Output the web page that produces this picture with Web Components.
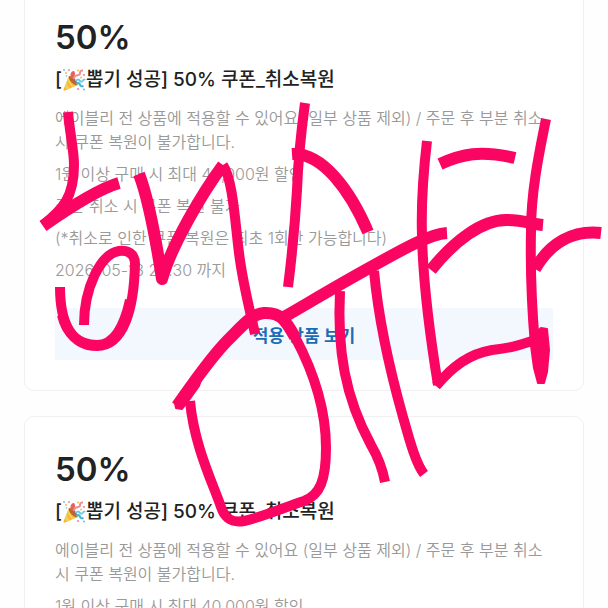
<!DOCTYPE html>
<html lang="ko">
<head>
<meta charset="utf-8">
<meta name="viewport" content="width=device-width, initial-scale=1">
<title>쿠폰</title>
<style>
body {
    margin: 0;
    background: #fefefe;
    font-family: Inter, "Noto Sans CJK KR", sans-serif;
    color: #222;
    overflow-x: hidden;
}
</style>
</head>
<body>
<coupon-page>
    <coupon-card rate="50%">
        <span slot="name">뽑기 성공] 50% 쿠폰_취소복원</span>
        <p>에이블리 전 상품에 적용할 수 있어요 (일부 상품 제외) / 주문 후 부분 취소 시 쿠폰 복원이 불가합니다.</p>
        <p>1원 이상 구매 시 최대 40,000원 할인</p>
        <p>주문 취소 시 쿠폰 복원 불가</p>
        <p>(*취소로 인한 쿠폰 복원은 최초 1회만 가능합니다)</p>
        <p>2026-05-13 23:30 까지</p>
        <span slot="action">적용 상품 보기</span>
    </coupon-card>
    <coupon-card rate="50%">
        <span slot="name">뽑기 성공] 50% 쿠폰_취소복원</span>
        <p>에이블리 전 상품에 적용할 수 있어요 (일부 상품 제외) / 주문 후 부분 취소 시 쿠폰 복원이 불가합니다.</p>
        <p>1원 이상 구매 시 최대 40,000원 할인</p>
    </coupon-card>
    <pen-marks slot="overlay"></pen-marks>
</coupon-page>

<script>
const page_template = document.createElement("template");
page_template.innerHTML = `
<style>
:host {
    display: block;
    position: relative;
    height: 100vh;
    overflow: hidden;
}
/* the list is scrolled a little, so the first card starts above the window */
main {
    display: flex;
    flex-direction: column;
    gap: 25px;
    margin-top: -16px;
    padding: 0 24px 24px;
}
</style>
<main><slot></slot></main>
<slot name="overlay"></slot>
`;

const popper_template = document.createElement("template");
popper_template.innerHTML = `
<style>
:host {
    display: inline-block;
    width: 24px;
    height: 24px;
}
svg { display: block; width: 100%; height: 100%; }
</style>
<svg viewBox="0 0 24 24" role="img" aria-label="🎉">
    <path d="M7 8 L1.5 21.5 Q1.3 23 3 22.6 L15.5 17 Q14 11 7 8Z" fill="#f9b52c"/>
    <path d="M5 13 Q5 19 8.5 20.2 L5.5 21.5 Q3 20 3.4 17Z M6.6 9 Q7.5 16 12.5 18.3 L10.5 19.3 Q6 16 5.6 11.5Z" fill="#f6d264"/>
    <ellipse cx="11.2" cy="12.6" rx="6" ry="2.3" transform="rotate(46 11.2 12.6)" fill="#b9672b"/>
    <path d="M9 10 Q7.5 6 10 3.5 Q12.5 2 13 5 Q13.3 8 11.5 11" fill="#e8605a"/>
    <path d="M12 11 Q12 7.5 15.5 7.2 Q18.5 7 18 4.5 Q18 2.5 21 2.6" fill="none" stroke="#ee8d91" stroke-width="2"/>
    <path d="M13.5 13 Q16 10.5 17.5 12.5 Q19 15 21 12.5 Q22 11 23 12" fill="none" stroke="#6cc7ec" stroke-width="2"/>
    <path d="M14 15.5 Q17 14.2 18 16.5 Q18.5 19 21.5 18" fill="none" stroke="#45b4dd" stroke-width="2"/>
    <g fill="#f4bf4f"><circle cx="4" cy="5" r="1"/><circle cx="16" cy="2.5" r="1"/><circle cx="19" cy="9.5" r="1"/></g>
    <g fill="#e9847c"><circle cx="7" cy="2" r=".9"/><circle cx="22" cy="7" r="1"/><circle cx="16" cy="21" r="1"/></g>
    <g fill="#69bfe2"><circle cx="2" cy="2" r=".9"/><circle cx="4.5" cy="8" r=".8"/><circle cx="22" cy="21.5" r="1"/></g>
</svg>
`;

const card_template = document.createElement("template");
card_template.innerHTML = `
<style>
:host {
    display: block;
    padding: 30px;
    background: #fff;
    border: 1px solid #f0f0f0;
    border-radius: 10px;
}
h2 {
    margin: 0 0 7px;
    font-size: 33px;
    line-height: 44px;
    font-weight: 600;
}
h3 {
    display: flex;
    align-items: center;
    margin: 0 0 12px;
    font-size: 19px;
    line-height: 28px;
    font-weight: 500;
}
.notes {
    display: flex;
    flex-direction: column;
    gap: 8px;
    margin-bottom: 26px;
}
::slotted(p) {
    margin: 0;
    font-size: 16px;
    line-height: 24px;
    font-weight: 350;
    color: #999;
    word-break: keep-all;
}
button {
    display: block;
    width: 100%;
    height: 52px;
    border: 0;
    background: #f3f8fe;
    color: #1c6cb4;
    font: inherit;
    font-size: 17px;
    font-weight: 600;
}
</style>
<h2 id="rate"></h2>
<h3>[<party-popper></party-popper><slot name="name"></slot></h3>
<div class="notes"><slot></slot></div>
<button type="button"><slot name="action"></slot></button>
`;

const marks_template = document.createElement("template");
marks_template.innerHTML = `
<style>
:host {
    position: absolute;
    top: 0;
    left: 0;
    pointer-events: none;
}
svg { display: block; }
path { fill: none; stroke: #fb0562; stroke-width: 10; stroke-linejoin: round; }
.wide { stroke-width: 12; }
.blob { fill: #fb0562; stroke-width: 2; }
</style>
<svg width="608" height="608" viewBox="0 0 608 608" aria-hidden="true">
    <path d="M68 112 C70 135 74 150 74 165 C74 197 63 209 43 225"/>
    <path class="wide" d="M43 226 C66 210 98 189 119 183"/>
    <path d="M60 287 C60 322 71 346 97 346 C124 346 134 308 135 264 C135 253 127 250 119 251 C100 254 84 289 84 325"/>
    <path d="M62 315 C66 333 78 345 97 345 C114 345 124 327 130 300"/>
    <path class="wide" d="M139 174 C149 200 156 240 162 279 C172 244 203 192 223 165"/>
    <path d="M223 165 C233 180 235 222 239 253 C243 285 250 310 255 334"/>
    <path d="M305 103 C300 140 298 163 297 190 C295 225 292 255 288 287"/>
    <path class="wide" d="M292 154 C322 152 350 190 368 232"/>
    <path class="wide" d="M447 233 C430 234 403 249 371 267 C340 284 310 302 284 317"/>
    <path class="wide" d="M177 406 C194 382 210 358 228 340 C243 325 252 314 264 313 C281 312 286 321 295 337"/>
    <path d="M264 313 C281 312 286 321 295 337 C310 365 326 405 326 448 C326 480 320 495 304 501 C283 508 262 517 244 521 C232 523 225 519 221 507 C214 486 194 446 190 401"/>
    <path class="blob" d="M175 403 L192 380 L202 377 L199 386 L189 400 L182 409 L176 408Z"/>
    <path d="M340 291 C337 350 345 397 371 445 C378 457 382 466 385 482"/>
    <path d="M374 271 C379 325 392 378 403 417 C410 442 416 464 424 474"/>
    <path d="M427 141 C423 175 421 205 422 235 C423 282 429 330 438 385"/>
    <path d="M436 386 C453 366 469 354 492 350 C511 348 520 345 535 340"/>
    <path class="wide" d="M440 164 C462 154 480 150 515 158"/>
    <path class="wide" d="M431 270 C454 241 482 220 506 220 C523 220 531 224 543 225"/>
    <path d="M546 119 C540 149 531 190 531 230 C530 276 532 310 535 345"/>
    <path class="wide" d="M535 269 C550 243 573 230 601 233"/>
    <path class="blob" d="M530 338 L541 328 L547 329 L549 350 L547 372 L544 383 L538 383 L534 368Z"/>
</svg>
`;

class CouponPage extends HTMLElement {
    constructor() {
        super();
        this.attachShadow({ mode: "open" }).appendChild(page_template.content.cloneNode(true));
    }
}

class PartyPopper extends HTMLElement {
    constructor() {
        super();
        this.attachShadow({ mode: "open" }).appendChild(popper_template.content.cloneNode(true));
    }
}

class CouponCard extends HTMLElement {
    constructor() {
        super();
        this.attachShadow({ mode: "open" }).appendChild(card_template.content.cloneNode(true));
    }

    static get observedAttributes() {
        return ["rate"];
    }

    attributeChangedCallback(property, oldValue, newValue) {
        if (oldValue === newValue) return;
        this.shadowRoot.querySelector("#rate").textContent = newValue;
    }
}

// Handwriting drawn over the cards
class PenMarks extends HTMLElement {
    constructor() {
        super();
        this.attachShadow({ mode: "open" }).appendChild(marks_template.content.cloneNode(true));
    }
}

customElements.define("party-popper", PartyPopper);
customElements.define("coupon-card", CouponCard);
customElements.define("pen-marks", PenMarks);
customElements.define("coupon-page", CouponPage);
</script>
</body>
</html>
